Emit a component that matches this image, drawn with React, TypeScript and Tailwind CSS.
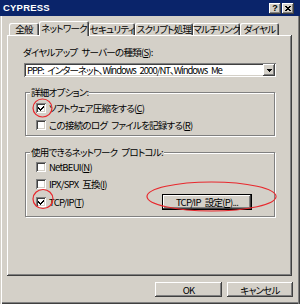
import React from "react";

const raised =
  "shadow-[inset_-1px_-1px_#404040,inset_1px_1px_#ffffff,inset_-2px_-2px_#808080,inset_2px_2px_#d4d0c8]";
const sunken =
  "shadow-[inset_1px_1px_#808080,inset_-1px_-1px_#ffffff,inset_2px_2px_#404040,inset_-2px_-2px_#d4d0c8]";

const SP = "\u2002";

function Check({ checked }: { checked?: boolean }) {
  return (
    <span className={`w-[10px] h-[10px] bg-white shrink-0 flex items-center justify-center ${sunken}`}>
      {checked && (
        <svg width="6" height="6" viewBox="0 0 6 6" shapeRendering="crispEdges">
          <polygon points="0,2 2,4 6,0 6,2 2,6 0,4" fill="#000" />
        </svg>
      )}
    </span>
  );
}

function CheckRow({ checked, children, className = "" }: { checked?: boolean; children: React.ReactNode; className?: string }) {
  return (
    <div className={`flex items-center h-[10px] ${className}`}>
      <Check checked={checked} />
      <span className="ml-[3px] leading-[12px] whitespace-nowrap">{children}</span>
    </div>
  );
}

function Tab({ label, selected, w }: { label: string; selected?: boolean; w: string }) {
  return (
    <div
      className={`${w} flex items-center justify-center bg-[#d4d0c8] rounded-t-[2px] shadow-[inset_1px_1px_#ffffff,inset_-1px_0_#404040,inset_-2px_0_#808080] ${
        selected ? "h-[15px] z-10 relative pb-[1px]" : "h-[12px] mt-[2px]"
      }`}
    >
      <span className="leading-[12px] whitespace-nowrap">{label}</span>
    </div>
  );
}

export default function App() {
  return (
    <div className="w-[300px] h-[304px] bg-[#d4d0c8] relative overflow-hidden flex flex-col text-black text-[9.5px] tracking-[-0.75px] font-['Noto_Sans_CJK_JP','Noto_Sans',sans-serif] [font-feature-settings:'palt']">
      {/* Title bar */}
      <div className="h-[16px] shrink-0 bg-[#0a246a] flex items-center pl-[3px] pr-[6px]">
        <span className="text-white font-bold text-[9.5px] font-['Liberation_Sans',sans-serif] tracking-[0.2px]">CYPRESS</span>
        <div className="ml-auto flex gap-[1px]">
          <div className={`w-[12px] h-[11px] bg-[#d4d0c8] flex items-center justify-center ${raised}`}>
            <span className="font-bold text-[9px] leading-[9px] tracking-normal font-['Liberation_Sans',sans-serif]">?</span>
          </div>
          <div className={`w-[12px] h-[11px] bg-[#d4d0c8] flex items-center justify-center ${raised}`}>
            <svg width="6" height="5" viewBox="0 0 6 5" shapeRendering="crispEdges">
              <path d="M0 0h1.5l1.5 1.7 1.5-1.7h1.5l-2.2 2.5 2.2 2.5h-1.5l-1.5-1.7-1.5 1.7h-1.5l2.2-2.5z" fill="#000" />
            </svg>
          </div>
        </div>
      </div>

      {/* Body */}
      <div className="flex-1 flex flex-col shadow-[inset_1px_0_#d4d0c8,inset_2px_0_#ffffff,inset_-1px_0_#404040,inset_-2px_0_#808080,inset_0_-1px_#404040,inset_0_-2px_#808080]">
        {/* Tabs */}
        <div className="flex pl-[9px] pt-[5px] h-[19px] shrink-0 items-start">
          <Tab label="全般" w="w-[30px]" />
          <Tab label="ネットワーク" w="w-[50px]" selected />
          <Tab label="セキュリティ" w="w-[46px]" />
          <Tab label="スクリプト処理" w="w-[58px]" />
          <Tab label="マルチリンク" w="w-[47px]" />
          <Tab label="ダイヤル" w="w-[39px]" />
        </div>

        {/* Panel */}
        <div className={`ml-[7px] mr-[8px] h-[241px] shrink-0 bg-[#d4d0c8] ${raised} pl-[17px] pr-[16px] pt-[11px] flex flex-col`}>
          <div className="h-[12px] leading-[12px] -ml-[1px] whitespace-nowrap">
            ダイヤルアップ{SP}サーバーの種類(<u>S</u>):
          </div>
          <div className={`mt-[5px] h-[14px] bg-white ${sunken} flex items-center pl-[3px] pr-[1px]`}>
            <span className="leading-[12px] whitespace-nowrap tracking-[-1px]">PPP:{SP}インターネット、Windows{SP}2000/NT、Windows{SP}Me</span>
            <div className={`ml-auto w-[12px] h-[12px] bg-[#d4d0c8] ${raised} flex items-center justify-center`}>
              <svg width="5" height="3" viewBox="0 0 5 3" shapeRendering="crispEdges">
                <polygon points="0,0 5,0 2.5,3" fill="#000" />
              </svg>
            </div>
          </div>

          {/* Group 1 */}
          <div className="mt-[15px] ml-[1px] mr-[1px] h-[44px] relative border border-[#808080] shadow-[inset_1px_1px_#ffffff,1px_1px_#ffffff] pt-[10px] pl-[10px] flex flex-col gap-[7px]">
            <span className="absolute -top-[7px] left-[4px] px-[1px] bg-[#d4d0c8] leading-[12px] whitespace-nowrap">詳細オプション:</span>
            <CheckRow checked>
              ソフトウェア圧縮をする(<u>C</u>)
            </CheckRow>
            <CheckRow>
              この接続のログ{SP}ファイルを記録する(<u>R</u>)
            </CheckRow>
          </div>

          {/* Group 2 */}
          <div className="mt-[16px] ml-[1px] mr-[1px] h-[65px] relative border border-[#808080] shadow-[inset_1px_1px_#ffffff,1px_1px_#ffffff] pt-[9px] pl-[10px] flex flex-col">
            <span className="absolute -top-[7px] left-[4px] px-[1px] bg-[#d4d0c8] leading-[12px] whitespace-nowrap">使用できるネットワーク{SP}プロトコル:</span>
            <CheckRow>
              NetBEUI(<u>N</u>)
            </CheckRow>
            <CheckRow className="mt-[7px]">
              IPX/SPX{SP}互換(<u>I</u>)
            </CheckRow>
            <div className="mt-[5px] flex items-center">
              <CheckRow checked>
                TCP/IP(<u>T</u>)
              </CheckRow>
              <button className={`ml-auto mr-[22px] w-[90px] h-[16px] border border-black bg-[#d4d0c8] ${raised} flex items-center justify-center`}>
                <span className="leading-[12px] whitespace-nowrap">TCP/IP{SP}設定(<u>P</u>)...</span>
              </button>
            </div>
          </div>
        </div>

        {/* Buttons */}
        <div className="mt-[6px] flex justify-end gap-[5px] pr-[7px]">
          <button className={`w-[67px] h-[15px] bg-[#d4d0c8] ${raised} flex items-center justify-center`}>
            <span className="leading-[12px]">OK</span>
          </button>
          <button className={`w-[66px] h-[15px] bg-[#d4d0c8] ${raised} flex items-center justify-center`}>
            <span className="leading-[12px]">キャンセル</span>
          </button>
        </div>
      </div>

      {/* Red annotation ellipses */}
      <svg className="absolute inset-0 pointer-events-none" width="300" height="304" viewBox="0 0 300 304">
        <ellipse cx="42.5" cy="108" rx="9.5" ry="9" fill="none" stroke="#e8282d" strokeWidth="1.2" />
        <ellipse cx="43" cy="199" rx="10" ry="9.5" fill="none" stroke="#e8282d" strokeWidth="1.2" />
        <ellipse cx="211.5" cy="196.5" rx="64.5" ry="14.5" fill="none" stroke="#e8282d" strokeWidth="1.2" />
      </svg>
    </div>
  );
}
